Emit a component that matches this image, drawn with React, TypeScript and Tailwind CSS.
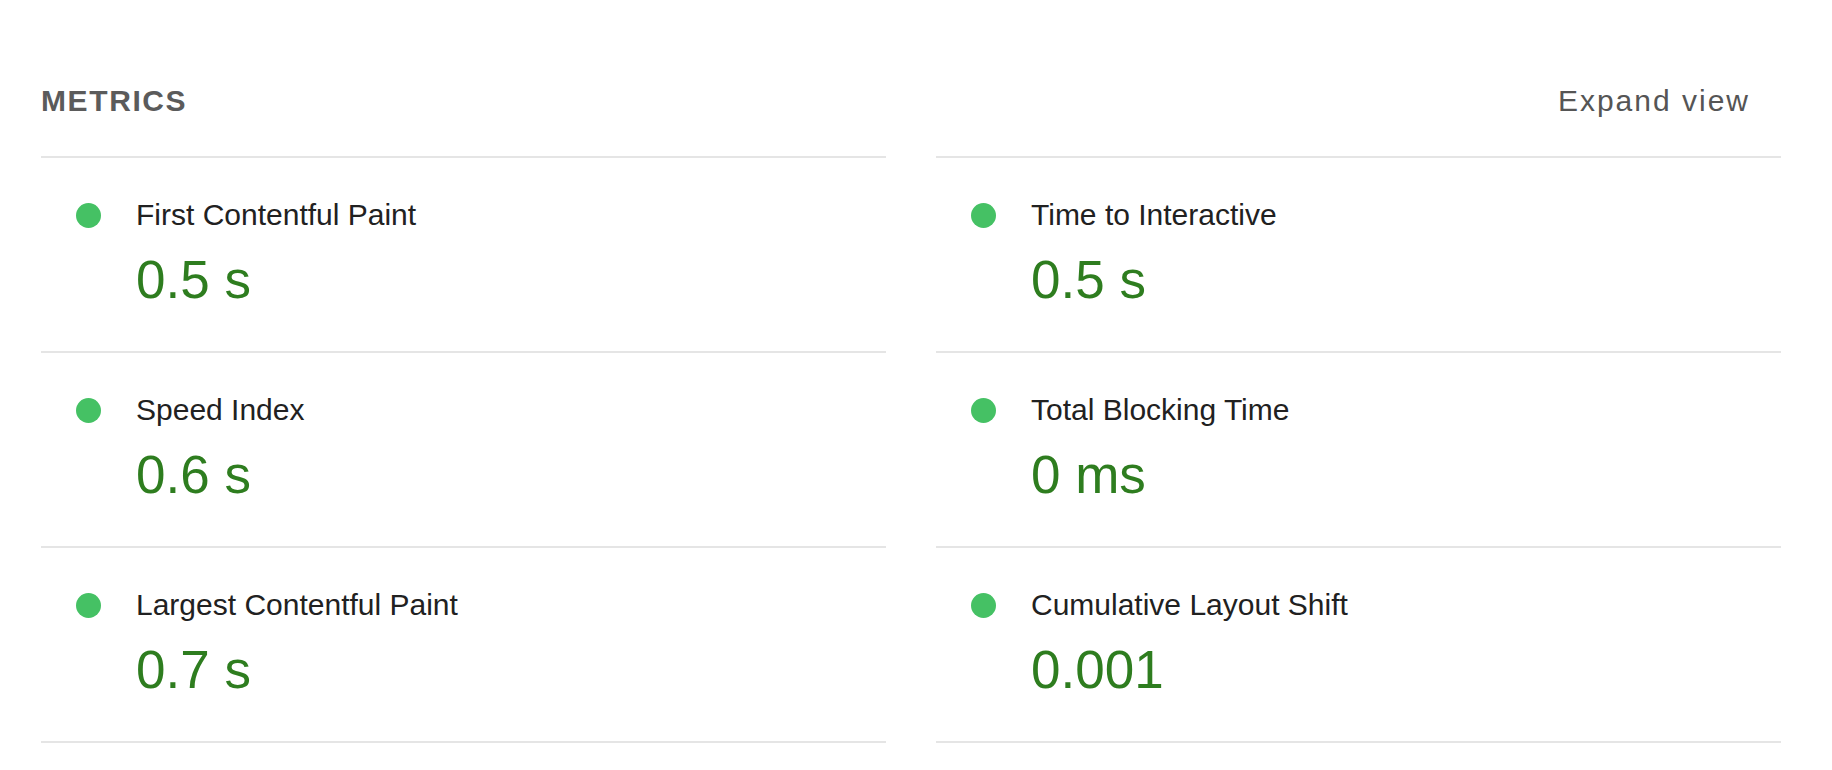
const metrics = [
  { title: 'First Contentful Paint', value: '0.5 s' },
  { title: 'Time to Interactive', value: '0.5 s' },
  { title: 'Speed Index', value: '0.6 s' },
  { title: 'Total Blocking Time', value: '0 ms' },
  { title: 'Largest Contentful Paint', value: '0.7 s' },
  { title: 'Cumulative Layout Shift', value: '0.001' },
]

function Metric({ title, value }: { title: string; value: string }) {
  return (
    <div className="border-t-2 border-[#e5e5e5] pt-[39px] pb-[41px]">
      <div className="flex items-center">
        <span className="ml-[35px] h-[25px] w-[25px] rounded-full bg-[#45c164]" />
        <span className="ml-[35px] text-[30px] leading-[36px] text-[#212121]">{title}</span>
      </div>
      <div className="mt-[17px] pl-[95px] text-[53px] leading-[60px] text-[#2e7d1f]">{value}</div>
    </div>
  )
}

export default function App() {
  return (
    <div
      className="min-h-[770px] bg-white pl-[41px] pt-[83px]"
      style={{ fontFamily: '"Liberation Sans", Arial, sans-serif' }}
    >
      <div className="w-[1740px]">
        <div className="flex items-center justify-between pr-[31px] pb-[37px]">
          <h2 className="text-[30px] font-bold leading-[36px] tracking-[1.6px] text-[#5b5b5b]">METRICS</h2>
          <button className="text-[30px] leading-[36px] tracking-[2px] text-[#555555]">Expand view</button>
        </div>
        <div className="grid grid-cols-[845px_845px] gap-x-[50px]">
          {metrics.map((m) => (
            <Metric key={m.title} title={m.title} value={m.value} />
          ))}
          <div className="border-t-2 border-[#e5e5e5]" />
          <div className="border-t-2 border-[#e5e5e5]" />
        </div>
      </div>
    </div>
  )
}
